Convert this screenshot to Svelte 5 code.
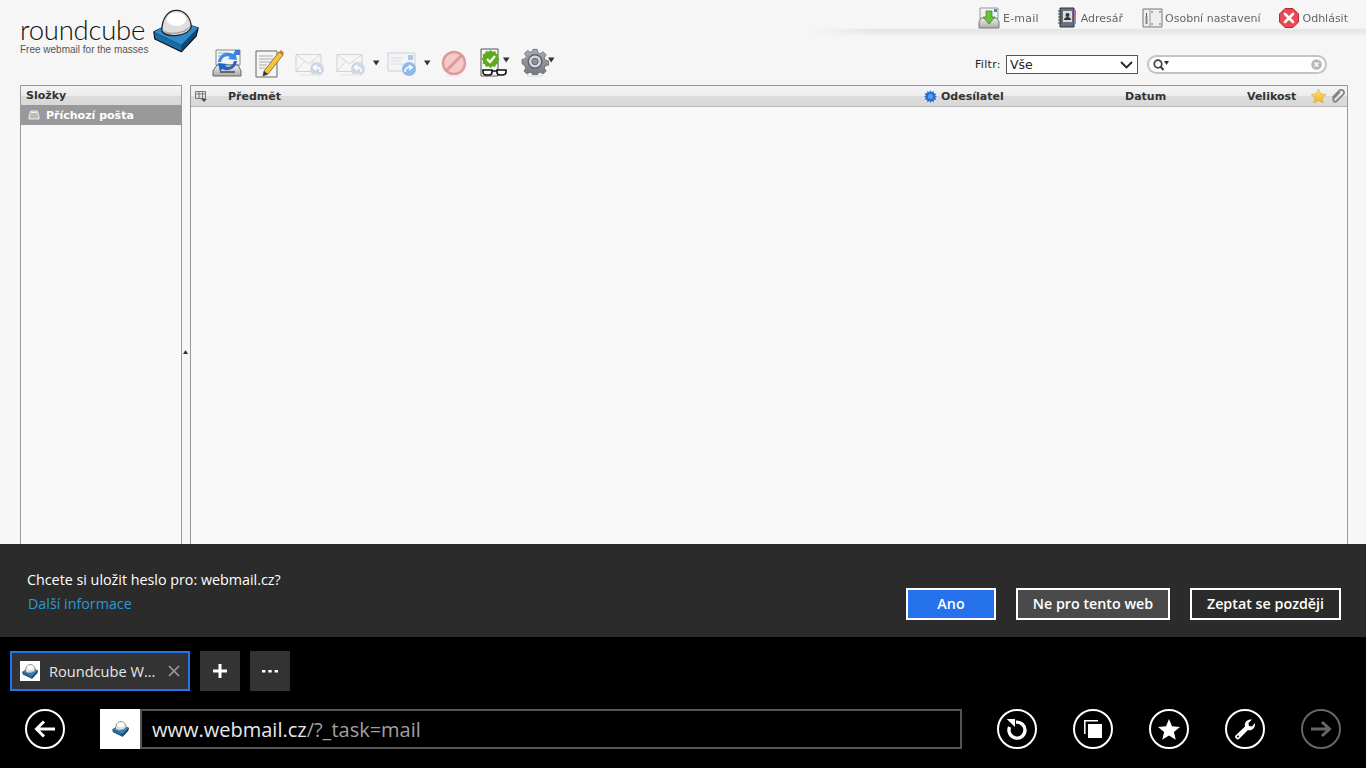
<script>
  const columns = [
    { label: 'Předmět', w: 696 },
    { label: 'Odesílatel', w: 201, burst: true },
    { label: 'Datum', w: 122 },
    { label: 'Velikost', w: 64 }
  ];
</script>

{#snippet caret()}
  <svg class="caret" width="7" height="6" viewBox="0 0 7 6"><path d="M0 .5h6.500L3.200 5.500z" fill="#333"/></svg>
{/snippet}

{#snippet cube(w, h)}
  <svg width={w} height={h} viewBox="0 0 48 44">
    <path d="M2 23 14 17 38 16 47 19 45 27 30 43 3 30z" fill="#15496f" stroke="#111" stroke-width="1.500" stroke-linejoin="round"/>
    <path d="M2 23 30 36 47 19 25 10z" fill="#2d8cc9"/>
    <path d="M2.500 24 30 36.500 30 42.500 3.500 30z" fill="#1b6ba6"/>
    <path d="M30 36.500 46.500 19.500 44.500 26.500 30 42.500z" fill="#104a78"/>
    <path d="M10 22C10 8 17 1 25 1s15 7 15 17c-3 9-24 12-30 4z" fill="#dedede" stroke="#222" stroke-width="1.300"/>
    <ellipse cx="25" cy="10" rx="10" ry="7" fill="#fff"/>
    <path d="M11 21c7 5 21 3 28-4-1 8-25 12-28 4z" fill="#a3a3a3"/>
  </svg>
{/snippet}

{#snippet envelope()}
  <svg width="30" height="30" viewBox="0 0 30 30">
    <path d="M1 6.500h25v17H1z" fill="#f6f6f6" stroke="#d2d2d2"/>
    <path d="M1 6.500 13.500 16 26 6.500M1 23.500 10 13M26 23.500 17 13" fill="none" stroke="#d8d8d8"/>
    <circle cx="22" cy="21" r="7" fill="#cfd7e6"/>
    <path d="M25 24c1-3-1-5-6-4.500m2.500-2.500-3 2.500 3 2.500" fill="none" stroke="#fff" stroke-width="1.600"/>
    <path d="M4 27h20" stroke="#ededed" stroke-width="2"/>
  </svg>
{/snippet}

<svg class="defs" width="0" height="0" aria-hidden="true">
  <defs>
    <linearGradient id="star" x1="0" y1="0" x2="0" y2="1"><stop offset="0" stop-color="#fbe38a"/><stop offset="1" stop-color="#eeb21f"/></linearGradient>
    <linearGradient id="steel" x1="0" y1="0" x2="0" y2="1"><stop offset="0" stop-color="#a9adb5"/><stop offset="1" stop-color="#71757e"/></linearGradient>
    <linearGradient id="tray" x1="0" y1="0" x2="0" y2="1"><stop offset="0" stop-color="#eee"/><stop offset="1" stop-color="#aaa"/></linearGradient>
  </defs>
</svg>

<div class="page">
  <section class="mail">
    <header class="head">
      <div class="logo">
        <div class="logo-row">
          <span class="word">roundcube</span>
          {@render cube(47, 44)}
        </div>
        <span class="slogan">Free webmail for the masses</span>
      </div>

      <nav class="toolbar">
        <span class="tool t-refresh">
          <svg width="30" height="30" viewBox="0 0 30 30">
            <path d="M4 2h24v15H4z" fill="#f1f3f5" stroke="#8a8a8a"/>
            <path d="M6 5h10M6 8h7" stroke="#9bb3cc"/>
            <path d="M23 2h5v5h-5z" fill="#3b7fd0"/>
            <path d="M1 23 5 17h21l3 6v5H1z" fill="url(#tray)" stroke="#666"/>
            <path d="M8 23h15v2H8z" fill="#666"/>
            <path d="M6 14C7 6 15 3 21 6l2-3 2 9-9-1 2-2c-4-2-8 0-9 5z" fill="#3b8be2"/>
            <path d="M25 13c-1 8-9 11-15 8l-2 3-2-9 9 1-2 2c4 2 8 0 9-5z" fill="#1f68c2"/>
          </svg>
        </span>
        <span class="tool t-compose">
          <svg width="30" height="30" viewBox="0 0 30 30">
            <path d="M2 3h21v26H2z" fill="#f4f4f4" stroke="#666"/>
            <path d="M5 8h14M5 11h14M5 14h12M5 17h8M5 20h6" stroke="#aaa"/>
            <path d="M10 23 25 4l4 3-15 19-5 2z" fill="#f2c53d" stroke="#7d6320" stroke-width=".8"/>
            <path d="M25 4l2-2 3 3-1 2z" fill="#d96a4a"/>
            <path d="M10 23l4 3-5 2z" fill="#333"/>
          </svg>
        </span>
        <span class="tool t-reply">{@render envelope()}</span>
        <span class="tool t-all">{@render envelope()}{@render caret()}</span>
        <span class="tool t-fwd">
          <svg width="30" height="30" viewBox="0 0 30 30">
            <path d="M1 5h27v18H1z" fill="#f2f4f7" stroke="#d0d0d0"/>
            <path d="M4 10h12M4 13h10M4 16h12" stroke="#d9dfe8"/>
            <path d="M21 7h5v5h-5z" fill="#a9c5ea"/>
            <circle cx="22" cy="21" r="7" fill="#8fb7ea"/>
            <path d="M18 24c0-4 3-5 6-5m-2-2 3 2.500-3 2.500" fill="none" stroke="#fff" stroke-width="1.600"/>
          </svg>
          {@render caret()}
        </span>
        <span class="tool t-del">
          <svg width="26" height="30" viewBox="0 0 26 30">
            <circle cx="13" cy="15" r="11" fill="#f6c9c9" stroke="#dd9a9a" stroke-width="2.400"/>
            <path d="M5.500 22.500 20.500 7.500" stroke="#dd9a9a" stroke-width="3"/>
            <path d="M5 28h16" stroke="#eee" stroke-width="2"/>
          </svg>
        </span>
        <span class="tool t-mark">
          <svg width="30" height="30" viewBox="0 0 30 30">
            <path d="M1 1h17v27H1z" fill="#f5f5f5" stroke="#555"/>
            <path d="M10.500 2l2 1.700 2.500-.6 1 2.400 2.400 1-.6 2.500 1.700 2-1.700 2 .6 2.500-2.400 1-1 2.400-2.500-.6-2 1.700-2-1.700-2.500.6-1-2.400-2.400-1 .6-2.500-1.700-2 1.700-2-.6-2.500 2.400-1 1-2.400 2.500.6z" fill="#5cab1c"/>
            <path d="M7 11l3 3 5-6" fill="none" stroke="#fff" stroke-width="2.200"/>
            <path d="M3 22h9v2c0 2-1 3-3 3H7c-2 0-4-1-4-3zM17 22h9v2c0 2-2 3-4 3h-2c-2 0-3-1-3-3zM12 23h5" fill="#fff" stroke="#111" stroke-width="1.600"/>
          </svg>
          {@render caret()}
        </span>
        <span class="tool t-gear">
          <svg width="30" height="30" viewBox="0 0 30 30">
            <path d="M12.500 1h5l.8 3.800 2.700 1.100 3.300-2.100 3.500 3.500-2.100 3.300 1.100 2.700 3.800.8v5l-3.800.8-1.100 2.700 2.100 3.300-3.500 3.500-3.300-2.100-2.700 1.100-.8 3.400h-5l-.8-3.400-2.700-1.100-3.300 2.100-3.500-3.500 2.100-3.300-1.100-2.700L0 17.500v-5l3.800-.8 1.100-2.700-2.100-3.300 3.500-3.500 3.300 2.100 2.700-1.100z" fill="url(#steel)" stroke="#5c5f66" stroke-width=".8" transform="translate(2 .5) scale(.87)"/>
            <circle cx="15" cy="13.500" r="7.500" fill="#5e626a"/>
            <circle cx="15" cy="13.500" r="6" fill="#d5d8de"/>
            <circle cx="15" cy="13.500" r="3.200" fill="#8d929b" stroke="#666"/>
            <path d="M7 28h16" stroke="#e6e6e6" stroke-width="2"/>
          </svg>
          {@render caret()}
        </span>
      </nav>

      <div class="right">
        <div class="links">
          <a class="link l-mail">
            <svg width="22" height="22" viewBox="0 0 22 22">
              <path d="M2 1h18v11H2z" fill="#f0f2f5" stroke="#999"/>
              <path d="M16 2h3v3h-3z" fill="#4a86d6"/>
              <path d="M1 15l2-4h16l2 4v6H1z" fill="url(#tray)" stroke="#777"/>
              <path d="M8 4h6v6h3l-6 7-6-7h3z" fill="#6cc13a" stroke="#3f7d1c" stroke-width=".7"/>
            </svg>
            <span>E-mail</span>
          </a>
          <a class="link l-book">
            <svg width="20" height="22" viewBox="0 0 20 22">
              <path d="M3 1h14v19H3z" fill="#69737f" stroke="#333"/>
              <path d="M6 4h9v11H6z" fill="#d8dde2"/>
              <circle cx="10.500" cy="8" r="2" fill="#333"/>
              <path d="M7 13c0-4 7-4 7 0z" fill="#333"/>
              <path d="M1 4h4M1 7h4M1 10h4M1 13h4M1 16h4" stroke="#444" stroke-width="1.200"/>
              <path d="M17 3h2v5h-2z" fill="#b06ac8"/><path d="M17 8h2v4h-2z" fill="#e06a6a"/><path d="M17 12h2v5h-2z" fill="#6a9ae0"/>
            </svg>
            <span>Adresář</span>
          </a>
          <a class="link l-set">
            <svg width="21" height="22" viewBox="0 0 21 22">
              <path d="M1 2h19v18H1z" fill="#eee" stroke="#777"/>
              <path d="M8 2v18" stroke="#999"/>
              <path d="M3.500 9h2v8h-2z" fill="#888"/>
              <path d="M4 6h1v3H4z" fill="#555"/>
              <circle cx="10" cy="5" r=".8" fill="#555"/><circle cx="18" cy="5" r=".8" fill="#555"/><circle cx="10" cy="17" r=".8" fill="#555"/><circle cx="18" cy="17" r=".8" fill="#555"/>
            </svg>
            <span>Osobní nastavení</span>
          </a>
          <a class="link l-out">
            <svg width="20" height="20" viewBox="0 0 20 20">
              <path d="M6 .5h8L19.500 6v8L14 19.500H6L.5 14V6z" fill="#e64a55" stroke="#b92a35"/>
              <path d="M6 6l8 8M14 6l-8 8" stroke="#fff" stroke-width="2.600" stroke-linecap="round"/>
            </svg>
            <span>Odhlásit</span>
          </a>
        </div>
        <div class="filter">
          <label for="flt">Filtr:</label>
          <div class="select" id="flt">
            <span>Vše</span>
            <svg width="13" height="8" viewBox="0 0 13 8"><path d="M1 1l5.500 5.500L12 1" fill="none" stroke="#222" stroke-width="1.800"/></svg>
          </div>
          <div class="search">
            <svg width="17" height="12" viewBox="0 0 17 12">
              <circle cx="5" cy="5" r="3.800" fill="none" stroke="#444" stroke-width="1.700"/>
              <path d="M7.500 7.500l3 3.500" stroke="#444" stroke-width="2.200"/>
              <path d="M11 2h5l-2.500 4z" fill="#333"/>
            </svg>
            <svg class="reset" width="11" height="11" viewBox="0 0 11 11">
              <circle cx="5.500" cy="5.500" r="5.300" fill="#b8b8b8"/>
              <path d="M3.500 3.500l4 4m0-4-4 4" stroke="#fff" stroke-width="1.500"/>
            </svg>
          </div>
        </div>
      </div>
    </header>

    <div class="panes">
      <aside class="box folders">
        <div class="bar"><span class="f-title">Složky</span></div>
        <div class="inbox">
          <svg width="12" height="10" viewBox="0 0 12 10">
            <path d="M2.500 1h7l1.500 6v2H1V7z" fill="#bbb" stroke="#eee"/>
            <path d="M3 2.500h6" stroke="#eee"/>
          </svg>
          <span>Příchozí pošta</span>
        </div>
      </aside>
      <div class="splitter">
        <svg width="5" height="4" viewBox="0 0 5 4"><path d="M0 4 2.500 0 5 4z" fill="#333"/></svg>
      </div>
      <main class="box messages">
        <div class="bar cols">
          <span class="c-icon">
            <svg width="12" height="11" viewBox="0 0 12 11">
              <path d="M.5.500h10v7H.5zM.5 3h10M4 .500v7M7.500.500v7" fill="none" stroke="#777"/>
              <path d="M6 8h6l-3 3z" fill="#555"/>
            </svg>
          </span>
          {#each columns as col}
            <span class="col" style="width:{col.w}px">
              {#if col.burst}
                <svg width="13" height="13" viewBox="0 0 13 13">
                  <path d="M6.500 0l1 2.200L9.700 1l.1 2.500 2.500.1-1.200 2.200L13 6.500l-1.900 1 1.200 2.200-2.500.1-.1 2.500-2.200-1.200-1 1.900-1-1.900-2.200 1.200-.1-2.500-2.500-.1 1.200-2.200L0 6.500l1.900-1L.7 3.300l2.500-.1L3.300 1l2.200 1.200z" fill="#1f6fd0"/>
                  <circle cx="6.500" cy="6.500" r="2.500" fill="#5b9df0"/>
                </svg>
              {/if}
              {col.label}
            </span>
          {/each}
          <span class="c-star">
            <svg width="15" height="14" viewBox="0 0 15 14">
              <path d="M7.500 0 9.800 4.800 15 5.500 11.200 9l1 5-4.700-2.500L2.800 14l1-5L0 5.500l5.200-.7z" fill="url(#star)" stroke="#d9a520" stroke-width=".5"/>
            </svg>
          </span>
          <span class="c-clip">
            <svg width="15" height="14" viewBox="0 0 15 14">
              <path d="M1.500 8.500 8.500 1.500c2.500-2 6 1.200 3.800 3.800L5.500 12.300c-1.800 1.500-4.500-1-2.800-3.200L9 3M5.500 7.500l-2-1" fill="none" stroke="#808080" stroke-width="1.700"/>
            </svg>
          </span>
        </div>
      </main>
    </div>
  </section>

  <section class="prompt">
    <div class="question">
      <p>Chcete si uložit heslo pro: webmail.cz?</p>
      <a>Další informace</a>
    </div>
    <div class="actions">
      <button class="b-yes">Ano</button>
      <button class="b-no">Ne pro tento web</button>
      <button class="b-later">Zeptat se později</button>
    </div>
  </section>

  <section class="browser">
    <div class="tabs">
      <div class="tab">
        <span class="fav small">{@render cube(16, 15)}</span>
        <span class="tab-title">Roundcube W...</span>
        <svg width="12" height="12" viewBox="0 0 12 12"><path d="M1 1l10 10M11 1 1 11" stroke="#999" stroke-width="1.700"/></svg>
      </div>
      <button class="tab-btn" aria-label="Nová karta">
        <svg width="14" height="14" viewBox="0 0 14 14"><path d="M7 0v14M0 7h14" stroke="#fff" stroke-width="3"/></svg>
      </button>
      <button class="tab-btn" aria-label="Další">
        <svg width="16" height="4" viewBox="0 0 16 4"><path d="M0 1h3.400v2.400H0zM6.300 1h3.400v2.400H6.300zM12.600 1H16v2.400h-3.400z" fill="#fff"/></svg>
      </button>
    </div>
    <div class="nav">
      <button class="round back" aria-label="Zpět">
        <svg width="24" height="20" viewBox="0 0 24 20"><path d="M22 10H4M11 2.500 3.500 10 11 17.500" fill="none" stroke="#fff" stroke-width="3"/></svg>
      </button>
      <div class="fav large">{@render cube(17, 16)}</div>
      <div class="url"><b>www.webmail.cz</b>/?_task=mail</div>
      <div class="nav-right">
        <button class="round" aria-label="Obnovit">
          <svg width="24" height="26" viewBox="0 0 24 26">
            <path d="M11 6.200A8 8 0 1 1 4.600 11" fill="none" stroke="#fff" stroke-width="3.400"/>
            <path d="M1.700 3H10v8z" fill="#fff"/>
          </svg>
        </button>
        <button class="round" aria-label="Karty">
          <svg width="18" height="18" viewBox="0 0 18 18">
            <path d="M.800 14V.800H14" fill="none" stroke="#fff" stroke-width="1.500"/>
            <path d="M4 4h14v14H4z" fill="#fff"/>
          </svg>
        </button>
        <button class="round" aria-label="Oblíbené">
          <svg width="22" height="21" viewBox="0 0 22 21"><path d="M11 0l3 7.300 8 .6-6.100 5.100 1.900 7.800L11 16.600l-6.800 4.200 1.900-7.800L0 7.900l8-.6z" fill="#fff"/></svg>
        </button>
        <button class="round" aria-label="Nástroje">
          <svg width="22" height="22" viewBox="0 0 22 22">
            <path d="M1.500 17.500 11 8.500c-1-4 2-7.500 7-7l-3.500 3.500.5 3 3 .5L21 5c.5 5-3 8-7 7l-9 9c-2 1.500-5-1.500-3.500-3.500z" fill="#fff"/>
            <circle cx="4" cy="18.500" r="1" fill="#000"/>
          </svg>
        </button>
        <button class="round off" aria-label="Vpřed">
          <svg width="22" height="18" viewBox="0 0 22 18"><path d="M1 9h18M12 2l7.500 7-7.500 7" fill="none" stroke="#666" stroke-width="3"/></svg>
        </button>
      </div>
    </div>
  </section>
</div>

<style>
  :global(body) { margin: 0; background: #000; }
  .defs { display: block; height: 0; }
  .page { width: 1366px; height: 768px; display: flex; flex-direction: column; overflow: hidden; }

  .mail { height: 544px; flex: none; background: #f6f6f6; display: flex; flex-direction: column; overflow: hidden; font-family: "DejaVu Sans", Verdana, sans-serif; font-size: 11px; }
  .head { height: 85px; flex: none; display: flex; box-sizing: border-box; }

  .logo { width: 192px; flex: none; box-sizing: border-box; padding: 9px 0 0 19px; display: flex; flex-direction: column; }
  .logo-row { display: flex; align-items: flex-start; height: 36px; }
  .word { font: 300 27.500px/30px Lato, sans-serif; color: #111; width: 131px; flex: none; margin-top: 6px; letter-spacing: -.25px; padding-left: 1px; box-sizing: border-box; }
  .logo-row svg { margin-left: 2px; flex: none; }
  .slogan { font: 10px/10px "Liberation Sans", Arial, sans-serif; color: #555; padding-left: 1px; }

  .toolbar { display: flex; align-items: flex-start; padding-top: 48px; flex: none; width: 618px; box-sizing: border-box; }
  .tool { display: flex; align-items: flex-start; height: 30px; }
  .t-refresh { margin-left: 20px; width: 42px; }
  .t-compose { width: 41px; }
  .t-reply { width: 41px; }
  .t-all { width: 51px; }
  .t-fwd { width: 54px; }
  .t-del { width: 39px; }
  .t-mark { width: 40px; }
  .caret { margin: 12px 0 0 7px; flex: none; }
  .t-mark .caret { margin: 9px 0 0 -7px; }
  .t-gear .caret { margin: 9px 0 0 -2px; }

  .right { flex: 1; display: flex; flex-direction: column; min-width: 0; }
  .links { height: 37px; box-sizing: border-box; padding: 7px 18px 0 0; display: flex; justify-content: flex-end; align-items: flex-start; background: linear-gradient(to bottom, transparent 28px, #e4e4e4 30px, #f6f6f6 37px); -webkit-mask-image: linear-gradient(to right, transparent 0, #000 60px); mask-image: linear-gradient(to right, transparent 0, #000 60px); }
  .link { display: flex; align-items: center; gap: 4px; color: #666; height: 22px; }
  .l-mail { margin-right: 18px; gap: 3px; letter-spacing: .2px; }
  .l-book { margin-right: 19px; }
  .l-set { margin-right: 19px; gap: 2px; }
  .l-out { gap: 3px; }
  .filter { display: flex; align-items: center; height: 19px; margin-top: 18px; padding-left: 165px; color: #222; }
  .filter label { width: 31px; flex: none; letter-spacing: .3px; }
  .select { width: 132px; height: 19px; box-sizing: border-box; border: 1px solid #555; background: #fff; display: flex; align-items: center; justify-content: space-between; padding: 0 4px 0 3px; font-size: 12.500px; color: #222; }
  .search { width: 180px; height: 19px; box-sizing: border-box; margin-left: 9px; border: 2px solid #c4c4c4; border-radius: 10px; background: #fff; display: flex; align-items: center; justify-content: space-between; padding: 0 3px 0 4px; }

  .panes { flex: 1; display: flex; padding-left: 20px; min-height: 0; }
  .box { border: 1px solid #999; border-bottom: 0; box-sizing: border-box; background: #f9f9f9; }
  .folders { width: 162px; flex: none; }
  .splitter { width: 8px; flex: none; display: flex; align-items: center; justify-content: center; padding: 74px 2px 0 0; box-sizing: border-box; height: 459px; }
  .messages { width: 1158px; flex: none; }
  .bar { height: 20px; display: flex; align-items: center; font-weight: 700; color: #333; background: linear-gradient(to bottom, #f4f4f4 0, #ececec 50%, #dcdcdc 51%, #d8d8d8 100%); border-bottom: 1px solid #b5b5b5; box-sizing: content-box; }
  .f-title { padding-left: 5px; }
  .folders .bar { height: 19px; border-bottom: 0; }
  .inbox { height: 20px; background: #999; color: #fff; font-weight: 700; display: flex; align-items: center; padding-left: 7px; gap: 6px; }
  .c-icon { width: 37px; padding-left: 4px; box-sizing: border-box; display: flex; }
  .col { display: flex; align-items: center; gap: 4px; box-sizing: border-box; }
  .c-star { width: 20px; display: flex; }
  .c-clip { width: 16px; display: flex; }

  .prompt { height: 93px; flex: none; background: #2b2b2b; display: flex; justify-content: space-between; box-sizing: border-box; padding: 0 25px 0 27px; font-family: "Open Sans", "Noto Sans", sans-serif; }
  .question { padding-top: 24px; font-size: 14.300px; line-height: 24px; }
  .question p { margin: 0; color: #fff; }
  .question a { display: block; color: #2a99d6; padding-left: 1px; }
  .actions { display: flex; gap: 20px; padding-top: 44px; }
  .actions button { height: 32px; box-sizing: border-box; border: 2px solid #fff; color: #fff; font: 600 14.300px "Open Sans", "Noto Sans", sans-serif; padding: 0 0 2px; background: transparent; }
  .b-yes { width: 90px; background: #2672ec !important; }
  .b-no { width: 154px; background: #4a4a4a !important; }
  .b-later { width: 151px; }

  .browser { flex: 1; background: #000; font-family: "Open Sans", "Noto Sans", sans-serif; display: flex; flex-direction: column; }
  .tabs { display: flex; gap: 10px; padding: 14px 0 0 10px; height: 40px; }
  .tab { width: 180px; height: 40px; box-sizing: border-box; border: 2px solid #2672ec; background: #333; display: flex; align-items: center; padding-left: 8px; color: #e6e6e6; font-size: 14.600px; }
  .fav { background: #fff; display: flex; align-items: center; justify-content: center; flex: none; }
  .fav.small { width: 20px; height: 20px; }
  .tab-title { width: 119px; margin-left: 9px; flex: none; white-space: nowrap; }
  .tab-btn { width: 40px; height: 40px; border: 0; background: #333; padding: 0; display: flex; align-items: center; justify-content: center; }

  .nav { display: flex; align-items: center; margin-top: 18px; height: 40px; }
  .round { width: 40px; height: 40px; box-sizing: border-box; border-radius: 50%; border: 2px solid #fff; background: transparent; padding: 0; display: flex; align-items: center; justify-content: center; flex: none; }
  .round.off { border-color: #666; }
  .back { margin: 0 35px 0 25px; }
  .fav.large { width: 40px; height: 40px; }
  .url { width: 822px; height: 40px; box-sizing: border-box; border: 2px solid #555; color: #a0a0a0; font-size: 20px; line-height: 38px; padding-left: 10px; white-space: nowrap; }
  .url b { font-weight: 400; color: #e8e8e8; }
  .nav-right { display: flex; gap: 36px; margin-left: 35px; }
</style>
